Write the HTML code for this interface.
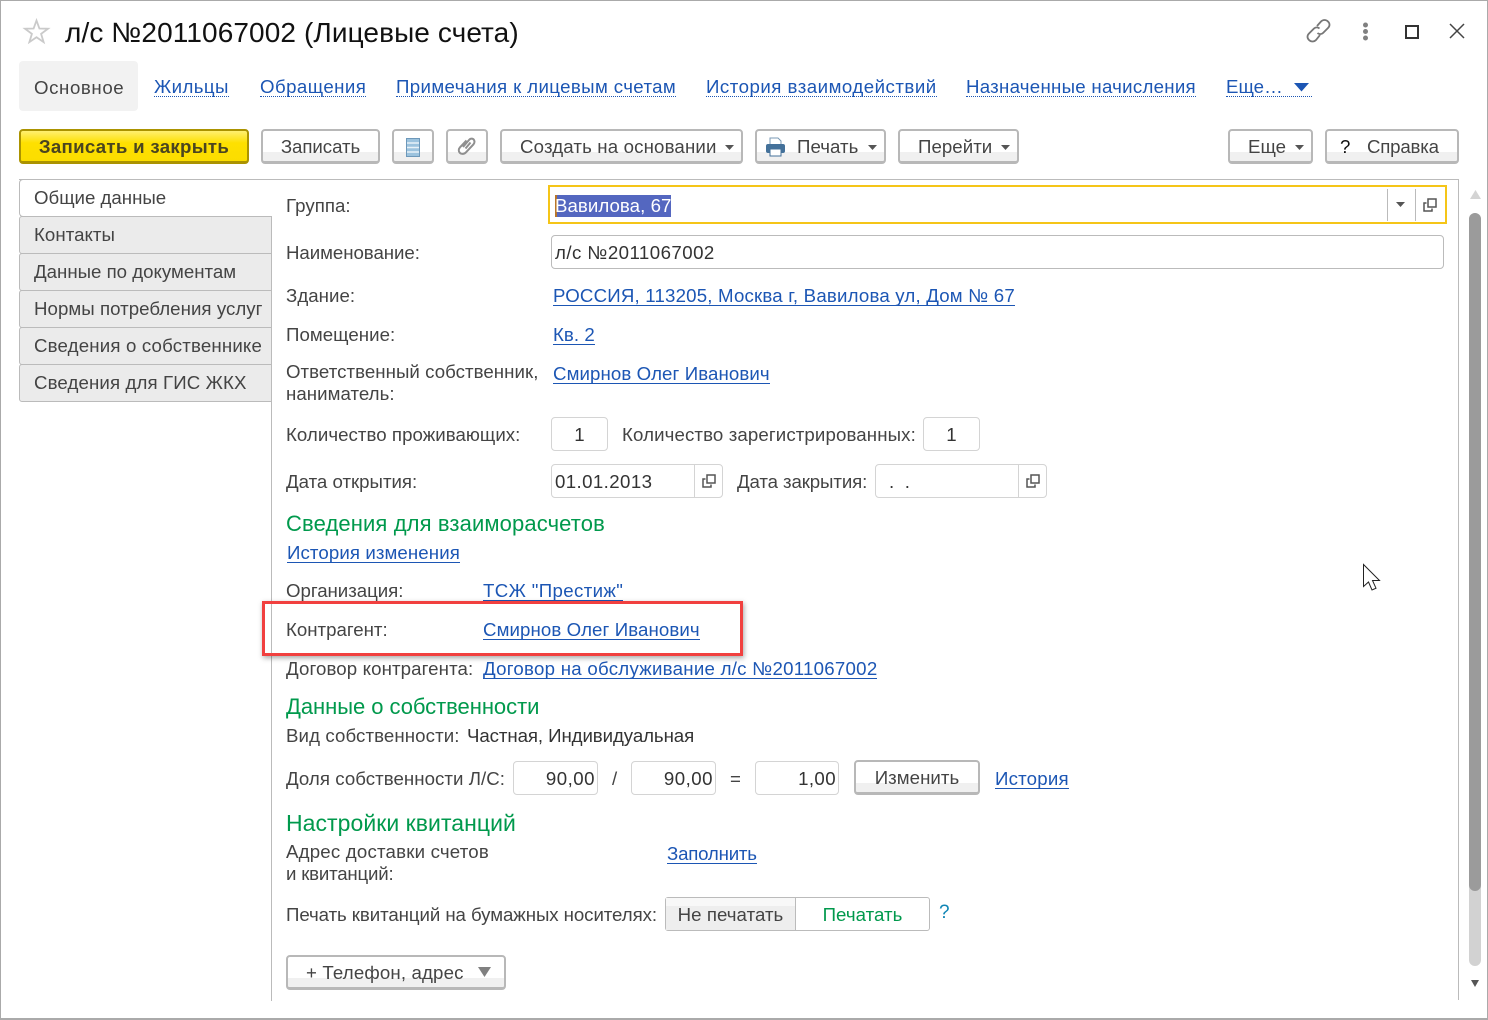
<!DOCTYPE html>
<html lang="ru"><head><meta charset="utf-8"><title>л/с</title>
<style>
html,body{margin:0;padding:0;background:#fff}
#w{position:relative;width:1488px;height:1020px;overflow:hidden;background:#fff;font-family:"Liberation Sans","Noto Sans CJK SC",sans-serif;font-size:18.67px;letter-spacing:.05px;color:#444}
#w div,#w a,#w span.t{position:absolute;white-space:nowrap;box-sizing:border-box}
.t{height:24px;line-height:24px}
a.l,.l{color:#1c56b4;text-decoration:none;border-bottom:1px solid #1c56b4;height:21px!important;line-height:22px}
a.d{color:#1c56b4;height:21px;line-height:22px;border-bottom:1px dotted #1c56b4;text-decoration:none}
.g{color:#00994c;font-size:22px;height:28px;line-height:28px;letter-spacing:0}
.b{height:35px;border:2px solid #b8b8b8;border-bottom-width:3px;border-radius:4px;background:linear-gradient(#fff 0,#fff 21px,#f0f0f0 21px,#f0f0f0 100%);text-align:center;line-height:32px;color:#444}
.f{border:1px solid #d4d4d4;border-radius:4px;background:#fff;height:34px;line-height:33px;color:#333}
.tab{left:19px;width:253px;height:38px;background:#ebebeb;border:1px solid #bbb;border-radius:3px 0 0 3px;padding-left:14px;line-height:36px;color:#444}
svg{position:absolute;overflow:visible}
</style></head><body><div id="w">
<div style="left:0;top:0;width:1488px;height:1020px;border:1px solid #aaa;border-width:1px 1px 2px 1px"></div>

<svg style="left:23px;top:18px" width="27" height="26" viewBox="0 0 27 26"><path d="M13.500 2.500l2.900 8 8.600.2-6.900 5.200 2.500 8.200-7.100-4.900-7.100 4.900 2.500-8.200L2 10.700l8.600-.2z" fill="#fff" stroke="#cacaca" stroke-width="1.800"/></svg>
<div class="t" style="left:65px;top:17px;height:32px;line-height:32px;font-size:28px;letter-spacing:.1px;color:#111">л/с №2011067002 (Лицевые счета)</div>

<svg style="left:1306px;top:18px" width="26" height="26" viewBox="0 0 26 26" fill="none" stroke="#777" stroke-width="1.800"><path d="M11 8l4-4.500c2-2 5-2 7 0s2 4.500 0 6.500l-5 5c-1.500 1.500-4 1.500-5.500 0"/><path d="M14 17l-4 5c-2 2-5 2-7 0s-2-4.500 0-6.500l5-5c1.500-1.500 4-1.500 5.500 0"/></svg>
<svg style="left:1360px;top:22px" width="11" height="19"><circle cx="5.500" cy="3" r="2.500" fill="#808080"/><circle cx="5.500" cy="9.500" r="2.500" fill="#808080"/><circle cx="5.500" cy="16" r="2.500" fill="#808080"/></svg>
<div style="left:1405px;top:25px;width:14px;height:14px;border:2px solid #333"></div>
<svg style="left:1449px;top:23px" width="16" height="16" fill="none" stroke="#444" stroke-width="1.500"><path d="M1 1l14 14M15 1L1 15"/></svg>

<div style="left:19px;top:61px;width:119px;height:50px;background:#f2f2f2;border-radius:4px"></div>
<div class="t" style="left:34px;top:76px;letter-spacing:.6px">Основное</div>
<a class="d" style="left:154px;top:76px;letter-spacing:.4px">Жильцы</a>
<a class="d" style="left:260px;top:76px;letter-spacing:.45px">Обращения</a>
<a class="d" style="left:396px;top:76px;letter-spacing:.38px">Примечания к лицевым счетам</a>
<a class="d" style="left:706px;top:76px;letter-spacing:.5px">История взаимодействий</a>
<a class="d" style="left:966px;top:76px;letter-spacing:.27px">Назначенные начисления</a>
<a class="d" style="left:1226px;top:76px;width:86px">Еще…</a>
<svg style="left:1294px;top:83px" width="15" height="9"><path d="M0 0h15l-7.500 8.500z" fill="#1c56b4"/></svg>

<div class="b" style="left:19px;top:129px;width:230px;border-color:#ab9300;background:linear-gradient(#fff071 0,#fee000 12px,#fbdd00 100%);font-weight:bold;color:#4a4520;letter-spacing:.3px">Записать и закрыть</div>
<div class="b" style="left:261px;top:129px;width:119px;letter-spacing:-.05px">Записать</div>
<div class="b" style="left:392px;top:129px;width:42px"></div>
<svg style="left:406px;top:138px" width="14" height="19"><rect x=".5" y=".5" width="13" height="18" fill="#9cc3de" stroke="#6d98ba"/><path d="M1 5h12M1 9.500h12M1 14h12" stroke="#e8f2f8" stroke-width="1.500"/></svg>
<div class="b" style="left:446px;top:129px;width:42px"></div>
<svg style="left:457px;top:136px" width="20" height="20" fill="none" stroke="#8f8f8f" stroke-width="2"><path d="M6 11l6-7c1.500-1.800 4-1.800 5 0s.5 3-.5 4.300l-7.500 8c-1.800 2-4.800 2-6.200.5s-1.300-3.800.2-5.500L9.500 4.500M8.500 12.500l5-6"/></svg>
<div class="b" style="left:500px;top:129px;width:243px;text-align:left;padding-left:18px;letter-spacing:.15px">Создать на основании</div>
<svg style="left:725px;top:145px" width="9" height="5"><path d="M0 0h9L4.500 5z" fill="#555"/></svg>
<div class="b" style="left:755px;top:129px;width:131px;text-align:left;padding-left:40px">Печать</div>
<svg style="left:765px;top:137px" width="21" height="20"><path d="M5 1h8l3 3v5H5z" fill="#fff" stroke="#7a9ab5"/><rect x="1" y="7" width="19" height="9" rx="2" fill="#44719a"/><rect x="5" y="12" width="11" height="7" fill="#fff" stroke="#44719a"/></svg>
<svg style="left:868px;top:145px" width="9" height="5"><path d="M0 0h9L4.500 5z" fill="#555"/></svg>
<div class="b" style="left:898px;top:129px;width:121px;text-align:left;padding-left:18px">Перейти</div>
<svg style="left:1001px;top:145px" width="9" height="5"><path d="M0 0h9L4.500 5z" fill="#555"/></svg>
<div class="b" style="left:1228px;top:129px;width:85px;text-align:left;padding-left:18px">Еще</div>
<svg style="left:1295px;top:145px" width="9" height="5"><path d="M0 0h9L4.500 5z" fill="#555"/></svg>
<div class="b" style="left:1325px;top:129px;width:134px;text-align:left;padding-left:40px;letter-spacing:-.2px">Справка</div>
<div class="t" style="left:1340px;top:135px;color:#111">?</div>

<div style="left:19px;top:179px;width:1440px;height:1px;background:#bbb"></div>
<div style="left:1458px;top:179px;width:1px;height:821px;background:#bbb"></div>
<div style="left:271px;top:216px;width:1px;height:785px;background:#bbb"></div>
<div class="tab" style="top:179px;background:#fff;border-right:0;width:253px;border-radius:4px 0 0 4px;height:38px;letter-spacing:0">Общие данные</div>
<div class="tab" style="top:216px">Контакты</div>
<div class="tab" style="top:253px;letter-spacing:0">Данные по документам</div>
<div class="tab" style="top:290px">Нормы потребления услуг</div>
<div class="tab" style="top:327px;letter-spacing:.17px">Сведения о собственнике</div>
<div class="tab" style="top:364px;letter-spacing:.12px">Сведения для ГИС ЖКХ</div>

<div class="t" style="left:286px;top:194px">Группа:</div>
<div style="left:548px;top:185px;width:899px;height:39px;border:2px solid #f5c518;background:#fff"></div>
<div style="left:555px;top:195px;width:116px;height:22px;background:#5467c0;border-left:2px solid #b8762a"></div>
<div class="t" style="left:555px;top:194px;color:#fff">Вавилова, 67</div>
<div style="left:1387px;top:189px;width:1px;height:32px;background:#bbb"></div>
<div style="left:1415px;top:189px;width:1px;height:32px;background:#bbb"></div>
<svg style="left:1396px;top:202px" width="9" height="5"><path d="M0 0h9L4.500 5z" fill="#555"/></svg>
<svg style="left:1423px;top:198px" width="14" height="14" fill="none" stroke="#555" stroke-width="1.500"><rect x="5" y="1" width="8" height="8"/><path d="M3.500 5H1v8h8v-2.500"/></svg>

<div class="t" style="left:286px;top:241px;letter-spacing:-.05px">Наименование:</div>
<div class="f" style="left:551px;top:235px;width:893px;padding-left:3px;border-color:#bbb;letter-spacing:.45px">л/с №2011067002</div>
<div class="t" style="left:286px;top:284px">Здание:</div>
<a class="l t" style="left:553px;top:285px;letter-spacing:.19px">РОССИЯ, 113205, Москва г, Вавилова ул, Дом № 67</a>
<div class="t" style="left:286px;top:323px">Помещение:</div>
<a class="l t" style="left:553px;top:324px">Кв. 2</a>
<div class="t" style="left:286px;top:360px">Ответственный собственник,</div>
<div class="t" style="left:286px;top:382px">наниматель:</div>
<a class="l t" style="left:553px;top:363px;letter-spacing:.1px">Смирнов Олег Иванович</a>

<div class="t" style="left:286px;top:423px">Количество проживающих:</div>
<div class="f" style="left:551px;top:417px;width:57px;text-align:center">1</div>
<div class="t" style="left:622px;top:423px;letter-spacing:.12px">Количество зарегистрированных:</div>
<div class="f" style="left:923px;top:417px;width:57px;text-align:center">1</div>
<div class="t" style="left:286px;top:470px;letter-spacing:0">Дата открытия:</div>
<div class="f" style="left:551px;top:464px;width:172px;padding-left:3px;letter-spacing:.4px">01.01.2013</div>
<div style="left:694px;top:465px;width:1px;height:32px;background:#d4d4d4"></div>
<svg style="left:702px;top:474px" width="14" height="14" fill="none" stroke="#555" stroke-width="1.500"><rect x="5" y="1" width="8" height="8"/><path d="M3.500 5H1v8h8v-2.500"/></svg>
<div class="t" style="left:737px;top:470px;letter-spacing:-.1px">Дата закрытия:</div>
<div class="f" style="left:875px;top:464px;width:172px;padding-left:13px"> .&nbsp;&nbsp;.</div>
<div style="left:1018px;top:465px;width:1px;height:32px;background:#d4d4d4"></div>
<svg style="left:1026px;top:474px" width="14" height="14" fill="none" stroke="#555" stroke-width="1.500"><rect x="5" y="1" width="8" height="8"/><path d="M3.500 5H1v8h8v-2.500"/></svg>

<div class="t g" style="left:286px;top:510px;letter-spacing:.12px">Сведения для взаиморасчетов</div>
<a class="l t" style="left:287px;top:542px;letter-spacing:.1px">История изменения</a>
<div class="t" style="left:286px;top:579px;letter-spacing:-.03px">Организация:</div>
<a class="l t" style="left:483px;top:580px;letter-spacing:.37px">ТСЖ "Престиж"</a>
<div class="t" style="left:286px;top:618px;letter-spacing:0">Контрагент:</div>
<a class="l t" style="left:483px;top:619px;letter-spacing:.1px">Смирнов Олег Иванович</a>
<div class="t" style="left:286px;top:657px;letter-spacing:.12px">Договор контрагента:</div>
<a class="l t" style="left:483px;top:658px;letter-spacing:.26px">Договор на обслуживание л/с №2011067002</a>
<div style="left:262px;top:601px;width:481px;height:55px;border:3px solid #f1403f;box-shadow:1px 2px 5px rgba(0,0,0,.35)"></div>

<div class="t g" style="left:286px;top:693px;letter-spacing:-.05px">Данные о собственности</div>
<div class="t" style="left:286px;top:724px;letter-spacing:.1px">Вид собственности:</div>
<div class="t" style="left:467px;top:724px;color:#333;letter-spacing:-.08px">Частная, Индивидуальная</div>
<div class="t" style="left:286px;top:767px">Доля собственности Л/С:</div>
<div class="f" style="left:513px;top:761px;width:85px;text-align:right;padding-right:2px;letter-spacing:.5px">90,00</div>
<div class="t" style="left:612px;top:767px">/</div>
<div class="f" style="left:631px;top:761px;width:85px;text-align:right;padding-right:2px;letter-spacing:.5px">90,00</div>
<div class="t" style="left:730px;top:767px">=</div>
<div class="f" style="left:755px;top:761px;width:84px;text-align:right;padding-right:2px;letter-spacing:.4px">1,00</div>
<div class="b" style="left:854px;top:760px;width:126px;line-height:31px">Изменить</div>
<a class="l t" style="left:995px;top:768px;letter-spacing:.2px">История</a>

<div class="t g" style="left:286px;top:809px;font-size:23px;letter-spacing:.05px">Настройки квитанций</div>
<div class="t" style="left:286px;top:840px;letter-spacing:.2px">Адрес доставки счетов</div>
<div class="t" style="left:286px;top:862px;letter-spacing:-.2px">и квитанций:</div>
<a class="l t" style="left:667px;top:843px;letter-spacing:-.2px">Заполнить</a>
<div class="t" style="left:286px;top:903px;letter-spacing:-.07px">Печать квитанций на бумажных носителях:</div>
<div style="left:665px;top:897px;width:265px;height:34px;border:1px solid #bbb;border-radius:3px;background:#fff"></div>
<div style="left:666px;top:898px;width:130px;height:32px;background:linear-gradient(#f8f8f8 0,#f8f8f8 8px,#eee 8px,#eee);border-right:1px solid #bbb;text-align:center;line-height:33px;color:#444">Не печатать</div>
<div class="t" style="left:796px;top:903px;width:133px;text-align:center;color:#00994c">Печатать</div>
<div class="t" style="left:939px;top:901px;color:#0f85b5;font-size:19px">?</div>
<div class="b" style="left:286px;top:955px;width:220px;text-align:left;padding-left:18px;letter-spacing:.15px">+ Телефон, адрес</div>
<svg style="left:478px;top:967px" width="13" height="10"><path d="M0 0h13L6.500 10z" fill="#808080"/></svg>

<svg style="left:1470px;top:190px" width="11" height="9"><path d="M5.500 0L11 9H0z" fill="#d4d4d4"/></svg>
<div style="left:1469px;top:213px;width:12px;height:753px;background:#d2d2d2;border-radius:6px"></div>
<div style="left:1469px;top:213px;width:12px;height:678px;background:#9b9b9b;border-radius:6px"></div>
<svg style="left:1471px;top:980px" width="8" height="7"><path d="M0 0h8L4 7z" fill="#555"/></svg>

<svg style="left:1363px;top:564px" width="19" height="28"><path d="M.5.500v22l5-4.500 3.500 8 4-1.800-3.500-7.700h7z" fill="#fff" stroke="#222" stroke-width="1"/></svg>
</div></body></html>
